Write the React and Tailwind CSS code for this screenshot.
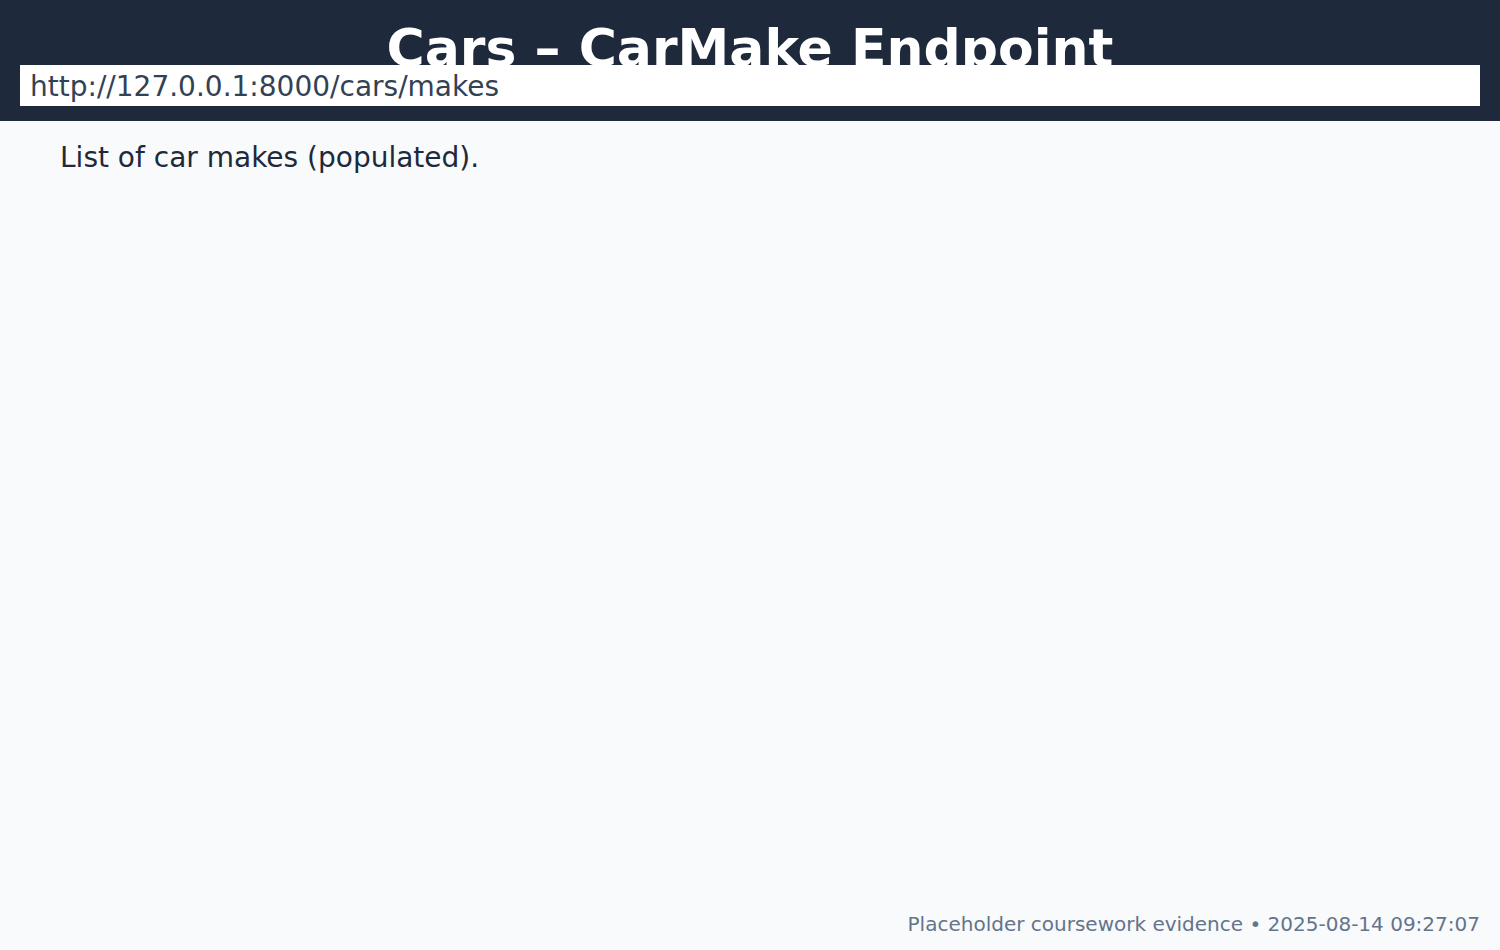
export default function App() {
  return (
    <div className="h-[950px] bg-[#f8fafc] flex flex-col font-['DejaVu_Sans',sans-serif]">
      {/* Header */}
      <header className="bg-[#1e293b] px-5 pb-[15px]">
        <h1 className="pt-[22px] h-[65px] text-center text-white font-bold text-[52px] leading-none whitespace-nowrap">
          Cars – CarMake Endpoint
        </h1>
        <div className="relative z-10 bg-white h-[41px] px-[10px] pt-[2px] flex items-center text-[28px] leading-none text-[#334155]">
          http://127.0.0.1:8000/cars/makes
        </div>
      </header>

      <main className="flex-1 px-[60px] pt-[23px]">
        <p className="text-[28px] leading-none text-[#1e293b]">List of car makes (populated).</p>
      </main>

      <footer className="px-5 pb-[16px] text-right text-[20px] leading-none text-[#64748b]">
        Placeholder coursework evidence • 2025-08-14 09:27:07
      </footer>
    </div>
  );
}
